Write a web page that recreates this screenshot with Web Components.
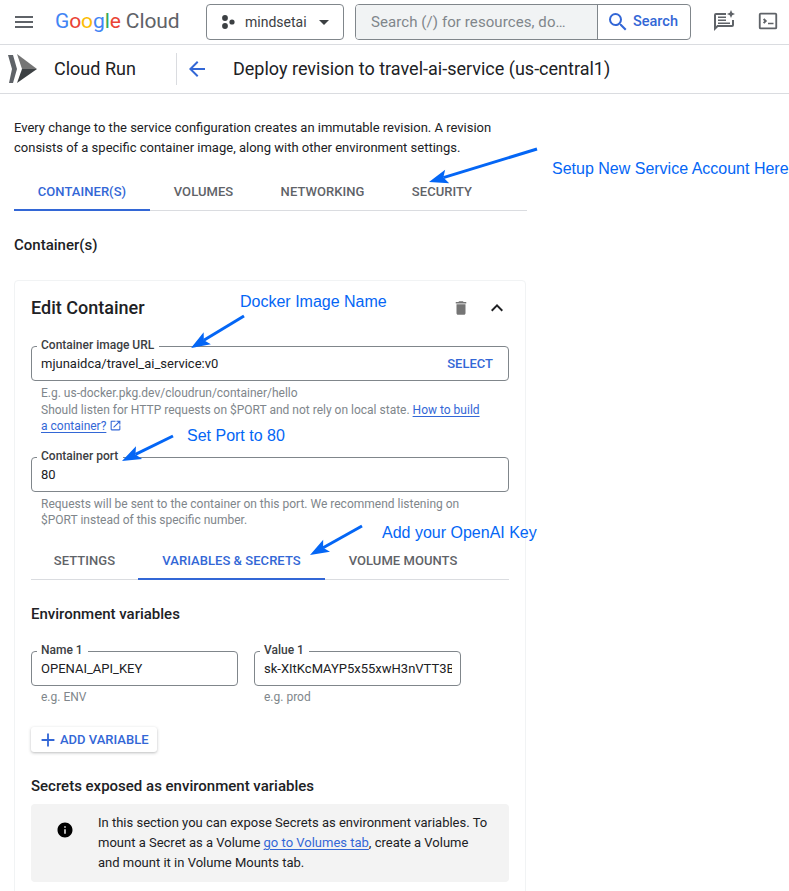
<!DOCTYPE html>
<html lang="en">
<head>
<meta charset="utf-8">
<title>Deploy revision</title>
<style>
  html, body { margin: 0; height: 891px; overflow: hidden; background: #fff; }
  body { position: relative; font: 13px/20px Roboto, "Liberation Sans", sans-serif; color: #202124; }
</style>
</head>
<body>
<gc-topbar></gc-topbar>
<gc-subbar title-text="Deploy revision to travel-ai-service (us-central1)"></gc-subbar>

<gc-page>
  <gc-intro>Every change to the service configuration creates an immutable revision. A revision consists of a specific container image, along with other environment settings.</gc-intro>

  <gc-tabs style="margin-top:14px">
    <gc-tab active w="136">CONTAINER(S)</gc-tab>
    <gc-tab w="107">VOLUMES</gc-tab>
    <gc-tab w="131">NETWORKING</gc-tab>
    <gc-tab w="108">SECURITY</gc-tab>
  </gc-tabs>

  <gc-heading style="margin-top:24px">Container(s)</gc-heading>

  <gc-card style="margin-top:25px">
    <gc-card-header>Edit Container</gc-card-header>

    <gc-field label="Container image URL" value="mjunaidca/travel_ai_service:v0" action="SELECT" style="margin-top:11px">
      E.g. us-docker.pkg.dev/cloudrun/container/hello<br>
      Should listen for HTTP requests on $PORT and not rely on local state. <gc-link>How to build a container?</gc-link> <gc-icon name="open" size="13" color="#3367d6"></gc-icon>
    </gc-field>

    <gc-field label="Container port" value="80" style="margin-top:22px">
      Requests will be sent to the container on this port. We recommend listening on $PORT instead of this specific number.
    </gc-field>

    <gc-tabs style="margin-top:12px">
      <gc-tab w="107">SETTINGS</gc-tab>
      <gc-tab active w="187">VARIABLES &amp; SECRETS</gc-tab>
      <gc-tab w="156">VOLUME MOUNTS</gc-tab>
    </gc-tabs>

    <gc-heading style="margin-top:24px">Environment variables</gc-heading>

    <gc-env-row style="margin-top:27px">
      <gc-field label="Name 1" value="OPENAI_API_KEY">e.g. ENV</gc-field>
      <gc-field label="Value 1" value="sk-XItKcMAYP5x55xwH3nVTT3BlbkFJ">e.g. prod</gc-field>
    </gc-env-row>

    <gc-add-button style="margin-top:22px">ADD VARIABLE</gc-add-button>

    <gc-heading style="margin-top:24px">Secrets exposed as environment variables</gc-heading>

    <gc-info style="margin-top:8px">In this section you can expose Secrets as environment variables. To mount a Secret as a Volume <gc-link>go to Volumes tab</gc-link>, create a Volume and mount it in Volume Mounts tab.</gc-info>
  </gc-card>
</gc-page>

<gc-notes>
  <gc-note x="552" y="160">Setup New Service Account Here</gc-note>
  <gc-note x="240" y="293">Docker Image Name</gc-note>
  <gc-note x="187" y="427">Set Port to 80</gc-note>
  <gc-note x="382" y="524">Add your OpenAI Key</gc-note>
  <gc-arrow x1="537" y1="149" x2="429" y2="182"></gc-arrow>
  <gc-arrow x1="244" y1="316" x2="191" y2="348"></gc-arrow>
  <gc-arrow x1="173" y1="436" x2="122" y2="461"></gc-arrow>
  <gc-arrow x1="362" y1="526" x2="310" y2="555"></gc-arrow>
</gc-notes>

<script>
const ICONS = {
  menu: 'M3 18h18v-2H3v2zm0-5h18v-2H3v2zm0-7v2h18V6H3z',
  back: 'M20 11H7.83l5.59-5.59L12 4l-8 8 8 8 1.41-1.41L7.83 13H20v-2z',
  search: 'M15.5 14h-.79l-.28-.27A6.471 6.471 0 0 0 16 9.5 6.5 6.5 0 1 0 9.5 16c1.61 0 3.09-.59 4.23-1.57l.27.28v.79l5 4.99L20.49 19l-4.99-5zm-6 0C7.01 14 5 11.99 5 9.5S7.01 5 9.5 5 14 7.01 14 9.5 11.99 14 9.5 14z',
  trash: 'M6 19c0 1.1.9 2 2 2h8c1.1 0 2-.9 2-2V7H6v12zM19 4h-3.5l-1-1h-5l-1 1H5v2h14V4z',
  less: 'M12 8l-6 6 1.41 1.41L12 10.83l4.59 4.58L18 14z',
  open: 'M19 19H5V5h7V3H5a2 2 0 0 0-2 2v14a2 2 0 0 0 2 2h14c1.1 0 2-.9 2-2v-7h-2v7zM14 3v2h3.59l-9.83 9.83 1.41 1.41L19 6.41V10h2V3h-7z',
  add: 'M19 13h-6v6h-2v-6H5v-2h6V5h2v6h6v2z',
  info: 'M12 2C6.48 2 2 6.48 2 12s4.48 10 10 10 10-4.48 10-10S17.52 2 12 2zm1 15h-2v-6h2v6zm0-8h-2V7h2v2z',
  drop: 'M7 10l5 5 5-5z',
  feedback: 'M20 4H4a2 2 0 0 0-2 2v16l4-4h14a2 2 0 0 0 2-2V11h-2v5H5.2L4 17.2V6h10V4h6zM6 7.5h8V9H6zm0 3h8V12H6zm0 3h12V15H6zM19 1l1.2 2.8L23 5l-2.8 1.2L19 9l-1.2-2.8L15 5l2.8-1.2z',
  terminal: 'M20 3H4a2 2 0 0 0-2 2v14a2 2 0 0 0 2 2h16a2 2 0 0 0 2-2V5a2 2 0 0 0-2-2zm0 16H4V5h16v14zM6.5 10.5 8 9l3 3-3 3-1.5-1.5L8 12zM12 14h6v1.5h-6z'
};

class GcElement extends HTMLElement {
  get html() { return `<slot></slot>`; }
  get css() { return `:host { display: block; }`; }

  connectedCallback() {
    if (!this.shadowRoot) {
      this.attachShadow({ mode: 'open' });
      this.shadowRoot.innerHTML = `<style>${this.css}</style>` + this.html;
    }
  }

  // GcFooBar becomes gc-foo-bar
  static defineElement() {
    const elementName = this.name.replace(/([a-z0-9])([A-Z])/g, '$1-$2').toLowerCase();
    if (!customElements.get(elementName)) {
      customElements.define(elementName, this);
    }
  }
}

class GcIcon extends GcElement {
  get css() {
    const size = this.getAttribute('size') || 24;
    return `:host { display: inline-block; width: ${size}px; height: ${size}px; vertical-align: -2px; flex: none; }
      svg { display: block; width: 100%; height: 100%; fill: ${this.getAttribute('color') || '#5f6368'}; }`;
  }
  get html() {
    return `<svg viewBox="0 0 24 24"><path fill-rule="evenodd" d="${ICONS[this.getAttribute('name')]}"/></svg>`;
  }
}

class GcTopbar extends GcElement {
  get css() {
    return `:host { display: flex; align-items: center; height: 44px; border-bottom: 1px solid #dadce0; padding-left: 12px; box-sizing: content-box; }
      .logo { margin: -3px 0 0 19px; width: 151px; font: 400 21px/24px Roboto, sans-serif; letter-spacing: -.1px; white-space: nowrap; color: #5f6368; }
      .b { color: #4285f4; } .r { color: #ea4335; } .y { color: #fbbc04; } .g { color: #34a853; }
      .project { display: flex; align-items: center; box-sizing: border-box; width: 138px; height: 36px; border: 1px solid #80868b; border-radius: 4px; padding-left: 14px; font-size: 14px; color: #3c4043; }
      .dots { width: 14px; height: 14px; margin-right: 10px; flex: none; }
      .project gc-icon { margin-left: 5px; }
      .search { display: flex; margin-left: 11px; box-sizing: border-box; width: 336px; height: 36px; border: 1px solid #80868b; border-radius: 4px; overflow: hidden; }
      .input { box-sizing: border-box; width: 242px; background: #f1f3f4; border-right: 1px solid #80868b; padding-left: 15px; font-size: 15px; line-height: 34px; color: #80868b; white-space: nowrap; letter-spacing: .08px; }
      .go { display: flex; align-items: center; padding-left: 8px; gap: 3px; font: 500 14.5px/34px Roboto, sans-serif; color: #3367d6; }
      .tools { display: flex; align-items: center; margin: -2px 0 0 21px; gap: 21px; }`;
  }
  get html() {
    return `<gc-icon name="menu"></gc-icon>
      <div class="logo"><span class="b">G</span><span class="r">o</span><span class="y">o</span><span class="b">g</span><span class="g">l</span><span class="r">e</span> Cloud</div>
      <div class="project">
        <svg class="dots" viewBox="0 0 14 14" fill="#3c4043"><circle cx="4" cy="3" r="2.9"/><circle cx="11" cy="7" r="2.6"/><circle cx="4" cy="11" r="2.9"/></svg>
        mindsetai<gc-icon name="drop" color="#3c4043"></gc-icon>
      </div>
      <div class="search">
        <div class="input">Search (/) for resources, do…</div>
        <div class="go"><gc-icon name="search" color="#3367d6"></gc-icon>Search</div>
      </div>
      <div class="tools"><gc-icon name="feedback"></gc-icon><gc-icon name="terminal" size="22"></gc-icon></div>`;
  }
}

class GcSubbar extends GcElement {
  get css() {
    return `:host { display: flex; align-items: center; height: 48px; border-bottom: 1px solid #dadce0; padding-left: 8px; }
      .logo { width: 30px; height: 30px; flex: none; }
      .product { width: 122px; margin-left: 16px; font: 400 18px/24px Roboto, sans-serif; color: #202124; }
      .sep { width: 1px; height: 32px; background: #dadce0; }
      gc-icon { margin-left: 8px; }
      h1 { margin: 0 0 0 24px; font: 400 18px/24px Roboto, sans-serif; color: #202124; }`;
  }
  get html() {
    return `<svg class="logo" viewBox="0 0 30 30">
        <polygon points="0,1 5,1 9,15 5,29 1,29 4,15" fill="#5f6368"/>
        <polygon points="9,0 29,15 14,15" fill="#757575"/>
        <polygon points="14,15 29,15 9,29" fill="#3c4043"/>
      </svg>
      <div class="product">Cloud Run</div>
      <div class="sep"></div>
      <gc-icon name="back" color="#3367d6"></gc-icon>
      <h1>${this.getAttribute('title-text')}</h1>`;
  }
}

class GcPage extends GcElement {
  get css() { return `:host { display: block; padding: 0 14px; }`; }
}

class GcIntro extends GcElement {
  get css() { return `:host { display: block; width: 490px; margin-top: 24px; font-size: 13px; line-height: 20px; color: #202124; }`; }
}

class GcTabs extends GcElement {
  get css() { return `:host { display: flex; width: 513px; height: 38px; border-bottom: 1px solid #dadce0; }
    :host-context(gc-card) { width: 478px; }`; }
}

class GcTab extends GcElement {
  get css() {
    const active = this.hasAttribute('active');
    return `:host { display: flex; justify-content: center; box-sizing: border-box; width: ${this.getAttribute('w')}px; height: 39px; padding-top: 10px;
        font: 500 13px/20px Roboto, sans-serif; letter-spacing: .05px; white-space: nowrap;
        color: ${active ? '#3367d6' : '#5f6368'}; border-bottom: 2px solid ${active ? '#3367d6' : 'transparent'}; }`;
  }
}

class GcHeading extends GcElement {
  get css() { return `:host { display: block; font: 500 15px/20px Roboto, sans-serif; color: #202124; }`; }
}

class GcCard extends GcElement {
  get css() { return `:host { display: block; box-sizing: border-box; width: 512px; height: 700px; border: 1px solid #f1f3f4; border-radius: 4px; padding: 0 16px; }`; }
}

class GcCardHeader extends GcElement {
  get css() {
    return `:host { display: flex; align-items: center; height: 54px; font: 500 18px/24px Roboto, sans-serif; color: #202124; }
      .t { flex: 1; }
      gc-icon + gc-icon { margin-left: 15px; }`;
  }
  get html() {
    return `<div class="t"><slot></slot></div>
      <gc-icon name="trash" size="18" color="#757575"></gc-icon>
      <gc-icon name="less" color="#202124"></gc-icon>`;
  }
}

class GcField extends GcElement {
  get css() {
    return `:host { display: block; min-width: 0; }
      .box { position: relative; display: flex; align-items: center; box-sizing: border-box; height: 35px; border: 1px solid #80868b; border-radius: 4px; padding: 0 8px 0 9px; }
      label { position: absolute; left: 5px; top: -9px; padding: 0 5px 0 4px; background: #fff; font: 500 12px/15px Roboto, sans-serif; color: #3c4043; white-space: nowrap; }
      .value { flex: 1; min-width: 0; overflow: hidden; white-space: nowrap; font-size: 13px; line-height: 20px; color: #202124; padding-top: 1px; }
      .action { font: 500 13px/20px Roboto, sans-serif; color: #3367d6; margin: 0 7px 0 8px; }
      .help { padding: var(--help-top, 4px) 24px 0 10px; font-size: 12px; line-height: 16.5px; color: #80868b; }`;
  }
  get html() {
    const action = this.getAttribute('action');
    return `<div class="box">
        <label>${this.getAttribute('label')}</label>
        <div class="value">${this.getAttribute('value')}</div>
        ${action ? `<div class="action">${action}</div>` : ''}
      </div>
      <div class="help"><slot></slot></div>`;
  }
}

class GcLink extends GcElement {
  get css() { return `:host { display: inline; color: #3367d6; text-decoration: underline; text-underline-offset: 2px; }`; }
}

class GcEnvRow extends GcElement {
  get css() { return `:host { display: grid; grid-template-columns: 207px 207px; gap: 16px; --help-top: 3px; }`; }
}

class GcAddButton extends GcElement {
  get css() {
    return `:host { display: flex; align-items: center; box-sizing: border-box; width: 126px; height: 25px; padding-left: 6px; gap: 1px; border-radius: 3px; background: #fff;
        box-shadow: 0 1px 3px rgba(60,64,67,.35); font: 500 13px/20px Roboto, sans-serif; color: #3367d6; white-space: nowrap; }`;
  }
  get html() { return `<gc-icon name="add" size="22" color="#3367d6"></gc-icon><slot></slot>`; }
}

class GcInfo extends GcElement {
  get css() {
    return `:host { display: flex; box-sizing: border-box; height: 78px; background: #f3f3f3; border-radius: 4px; padding: 9px 19px 0 25px; font-size: 13px; line-height: 20px; color: #202124; }
      gc-icon { margin: 8px 24px 0 0; }`;
  }
  get html() { return `<gc-icon name="info" size="18" color="#000"></gc-icon><div><slot></slot></div>`; }
}

// annotations drawn over the screenshot
class GcNotes extends GcElement {
  get css() { return `:host { position: absolute; left: 0; top: 0; width: 789px; height: 891px; pointer-events: none; }`; }
}

class GcNote extends GcElement {
  get css() {
    return `:host { position: absolute; left: ${this.getAttribute('x')}px; top: ${this.getAttribute('y')}px; font: 16px/18px "Liberation Sans", Arial, sans-serif; color: #0466f5; white-space: nowrap; }`;
  }
}

class GcArrow extends GcElement {
  get css() { return `:host { position: absolute; left: 0; top: 0; } svg { display: block; overflow: visible; }`; }
  get html() {
    const [x1, y1, x2, y2] = ['x1', 'y1', 'x2', 'y2'].map(a => Number(this.getAttribute(a)));
    const len = Math.hypot(x2 - x1, y2 - y1);
    const ux = (x2 - x1) / len, uy = (y2 - y1) / len;
    const bx = x2 - ux * 19, by = y2 - uy * 19;
    const nx = x2 - ux * 15, ny = y2 - uy * 15;
    const head = `${x2},${y2} ${bx - uy * 7},${by + ux * 7} ${nx},${ny} ${bx + uy * 7},${by - ux * 7}`;
    return `<svg width="1" height="1"><line x1="${x1}" y1="${y1}" x2="${nx}" y2="${ny}" stroke="#0466f5" stroke-width="3"/><polygon points="${head}" fill="#0466f5"/></svg>`;
  }
}

[GcIcon, GcTopbar, GcSubbar, GcPage, GcIntro, GcTabs, GcTab, GcHeading, GcCard, GcCardHeader,
  GcField, GcLink, GcEnvRow, GcAddButton, GcInfo, GcNotes, GcNote, GcArrow].forEach(c => c.defineElement());
</script>
</body>
</html>
